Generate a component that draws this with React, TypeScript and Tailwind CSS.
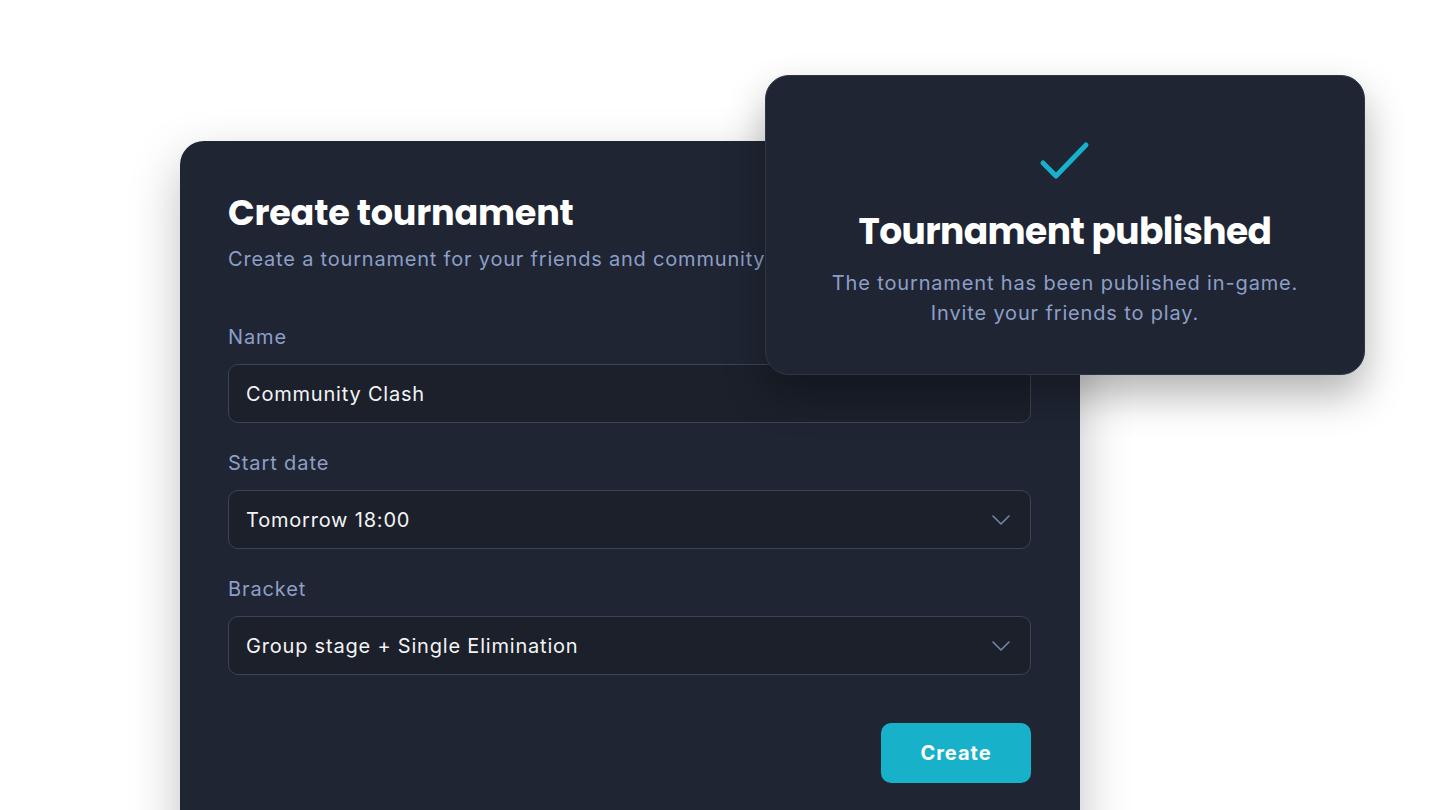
import { ChevronDown } from 'lucide-react';

const heading = { fontFamily: 'Poppins, Inter, "Liberation Sans", sans-serif' };

function Field({ label, value, select }: { label: string; value: string; select?: boolean }) {
  return (
    <div className="flex flex-col">
      <label className="text-[20px] leading-[28px] text-[#8d9fc7] tracking-[0.9px]">{label}</label>
      <div className="mt-[13px] h-[59px] rounded-[10px] border border-[#3a4558] bg-[#1b202b] flex items-center justify-between pl-[17px] pr-[13px]">
        <span className="text-[20px] text-[#f3f4f6] tracking-[0.8px]">{value}</span>
        {select && <ChevronDown className="w-[32px] h-[32px] text-[#7486ad]" strokeWidth={1.2} />}
      </div>
    </div>
  );
}

export default function App() {
  return (
    <div className="relative w-full h-[810px] overflow-hidden bg-white" style={{ fontFamily: 'Inter, "Liberation Sans", sans-serif' }}>
      <div className="ml-[180px] mt-[141px] w-[900px] h-[720px] rounded-t-[24px] bg-[#1f2533] px-[48px] pt-[50px] shadow-[0_20px_50px_rgba(0,0,0,0.25)]">
        <h1 className="text-[35px] leading-[44px] font-bold text-white tracking-[-0.2px]" style={heading}>
          Create tournament
        </h1>
        <p className="mt-[10px] text-[20px] leading-[28px] text-[#8d9fc7] tracking-[0.8px]">
          Create a tournament for your friends and community
        </p>
        <div className="mt-[50px] flex flex-col gap-[26px] w-[803px]">
          <Field label="Name" value="Community Clash" />
          <Field label="Start date" value="Tomorrow 18:00" select />
          <Field label="Bracket" value="Group stage + Single Elimination" select />
        </div>
        <div className="mt-[48px] w-[803px] flex justify-end">
          <button className="w-[150px] h-[60px] rounded-[10px] bg-[#17b1c9] text-white text-[20px] font-bold tracking-[1px]">
            Create
          </button>
        </div>
      </div>

      <div className="absolute left-[765px] top-[75px] w-[600px] h-[300px] rounded-[24px] bg-[#1f2533] border border-[#2e3748] shadow-[0_20px_40px_rgba(0,0,0,0.3)] flex flex-col items-center pt-[62px]">
        <svg width="52" height="44" viewBox="0 0 52 44" fill="none">
          <path d="M4 25 L17 38 L47 7" stroke="#17b1c9" strokeWidth="5" strokeLinecap="round" strokeLinejoin="round" />
        </svg>
        <h2 className="mt-[28px] text-[36px] leading-[44px] font-bold text-white tracking-[-0.6px]" style={heading}>
          Tournament published
        </h2>
        <p className="mt-[14px] text-[20px] leading-[30px] text-[#8d9fc7] text-center tracking-[0.85px]">
          The tournament has been published in-game.
          <br />
          Invite your friends to play.
        </p>
      </div>
    </div>
  );
}
